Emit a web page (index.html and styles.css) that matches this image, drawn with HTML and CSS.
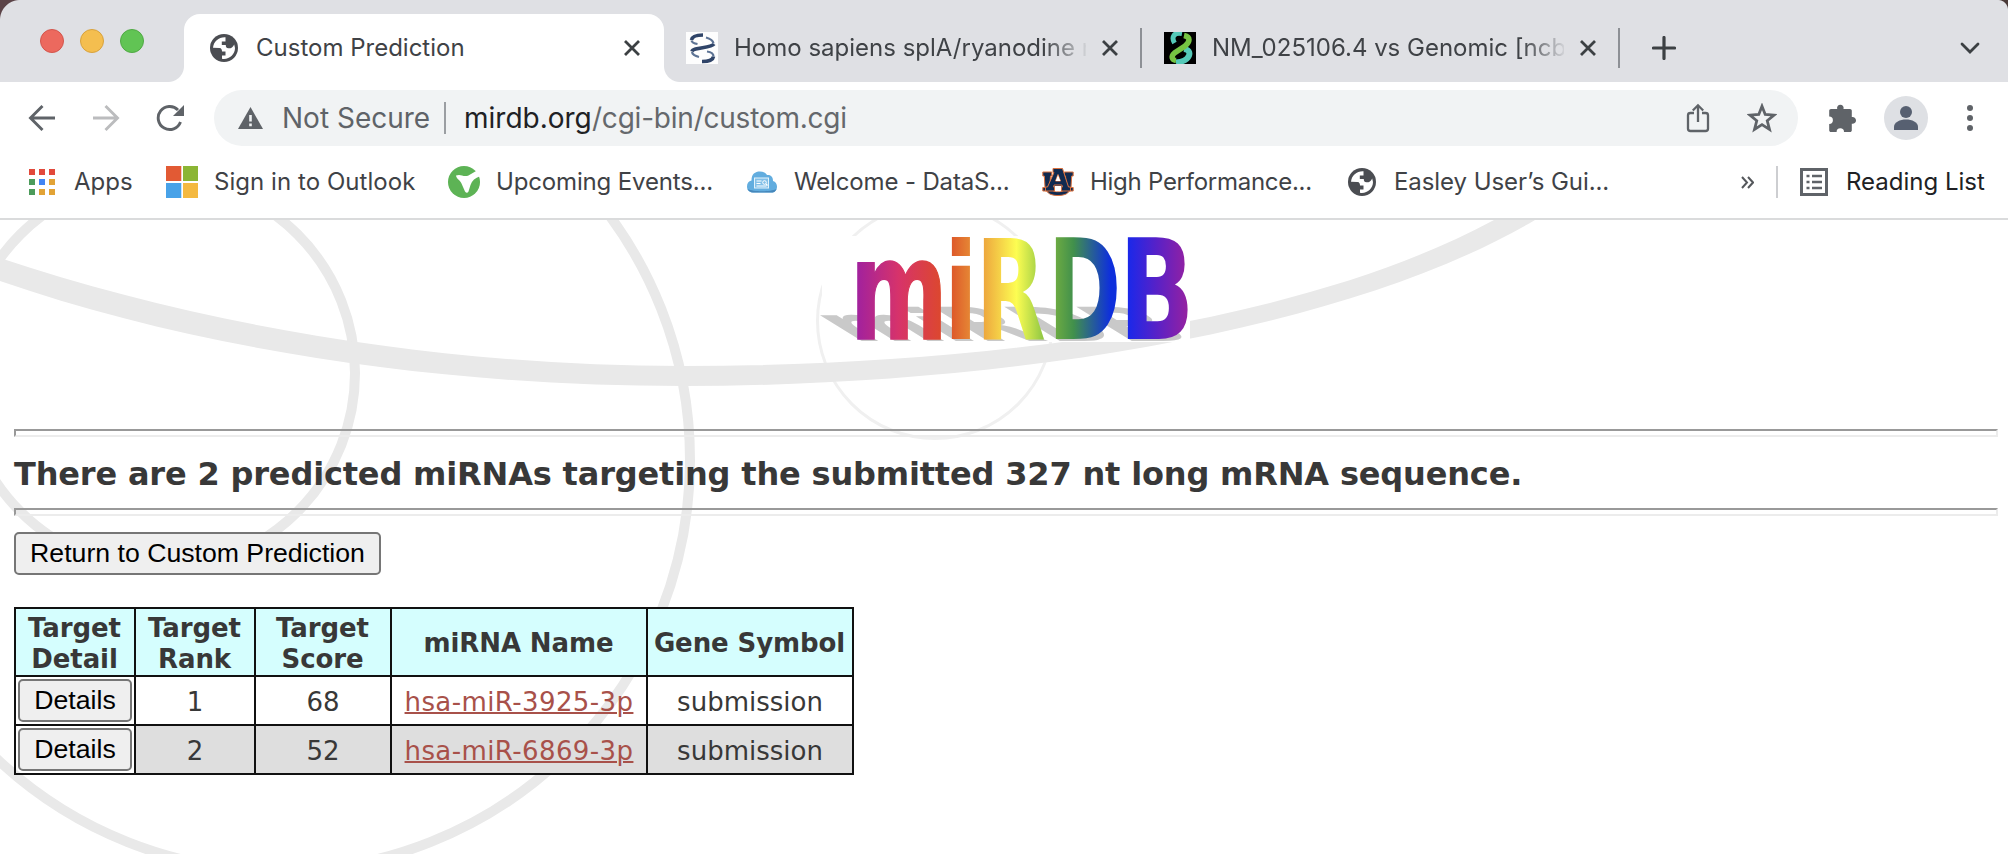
FILE: index.html
```html
<!DOCTYPE html>
<html lang="en">
<head>
<meta charset="utf-8">
<title>Custom Prediction</title>
<link rel="stylesheet" href="styles.css">
</head>
<body>
<svg class="defs" width="0" height="0" aria-hidden="true">
  <symbol id="globe" viewBox="0 0 28 28">
    <circle cx="14" cy="14" r="14" fill="#4b4d52"/>
    <path d="M15.500 3.200C9 2.800 3.500 7.300 3 13.800L9.500 14c2 0 2.500 2 2.500 3.500h3.500v4h-3.500v3.300C19 26 25 20.500 25 14l-.8-3.600c-1.400 2.800-3.200 4.100-5.700 3.900-2.300-.2-2.700-1.500-2.700-3.300h-4V7.600h3.700z" fill="#fff"/>
  </symbol>
  <symbol id="close" viewBox="0 0 18 18"><path d="M2 2l14 14M16 2L2 16" stroke="#3c4043" stroke-width="2.8" fill="none"/></symbol>
</svg>

<header class="browser">
  <div class="tabstrip">
    <div class="lights"><i class="light red"></i><i class="light amber"></i><i class="light green"></i></div>
    <div class="tab active">
      <svg class="ico28"><use href="#globe"/></svg>
      <span class="tab-title t1">Custom Prediction</span>
      <svg class="ico18"><use href="#close"/></svg>
    </div>
    <div class="tab second">
      <svg class="ico32" viewBox="0 0 32 32"><rect width="32" height="32" fill="#fdfdfd"/><g fill="none" stroke="#2f4468" stroke-width="3.600"><path d="M17 3C10 3 6 4.500 5.500 8"/><path d="M6 19.500C7 15 25 16.500 28 12"/><path d="M16 29.500c6 0 11-1.500 11.500-5"/></g><g fill="none" stroke="#5d7394" stroke-width="2.200"><path d="M20 5.500c4 1 7 3 7.500 6"/><path d="M5.500 8.500c.5 2 3 3 6 3.500"/><path d="M6 20c.5 2.500 3 4 7 5"/><path d="M21 19.500c4 .5 6.500 2 6.500 5"/></g></svg>
      <span class="tab-title fade t2">Homo sapiens splA/ryanodine receptor</span>
      <svg class="ico18"><use href="#close"/></svg>
    </div>
    <i class="tab-sep"></i>
    <div class="tab third">
      <svg class="ico32" viewBox="0 0 32 32"><rect width="32" height="32"/><g fill="none" stroke-width="5"><path d="M18 1.500C10 0 7 5 10.500 11" stroke="#55c9b8"/><path d="M20 17c9 1 7 12-8 13.500" stroke="#55c9b8" stroke-width="6"/><path d="M20 3.500c7 1.500 6 6 1 10.500L10.500 21C6.500 24.500 8 28 12 28.500" stroke="#76c442" stroke-width="5.500"/></g></svg>
      <span class="tab-title fade t3">NM_025106.4 vs Genomic [ncbi]</span>
      <svg class="ico18"><use href="#close"/></svg>
    </div>
    <i class="tab-sep"></i>
    <svg class="plus" viewBox="0 0 24 24"><path d="M12 1.500v21M1.500 12h21" stroke="#3c4043" stroke-width="3.200" stroke-linecap="round"/></svg>
    <svg class="chev" viewBox="0 0 20 12"><path d="M2 2l8 8 8-8" fill="none" stroke="#3c4043" stroke-width="2.800" stroke-linecap="round"/></svg>
  </div>

  <div class="toolbar">
    <svg class="nav" viewBox="0 0 28 28"><path d="M27 14H3M14.500 2L2.500 14l12 12" fill="none" stroke="#5f6368" stroke-width="2.900"/></svg>
    <svg class="nav" viewBox="0 0 28 28"><path d="M1 14h24M13.500 2l12 12-12 12" fill="none" stroke="#bbbcbe" stroke-width="2.900"/></svg>
    <svg class="nav" viewBox="0 0 28 28"><path d="M24.500 18A11.500 11.500 0 1 1 22 6" fill="none" stroke="#5f6368" stroke-width="2.900"/><path d="M28 1v11H17z" fill="#5f6368"/></svg>
    <div class="omnibox">
      <svg class="warn" viewBox="0 0 25 22"><path d="M12.500 0L25 22H0z" fill="#5f6368"/><path d="M12.500 8v6.500M12.500 16.500v2.700" stroke="#f1f3f4" stroke-width="2.600"/></svg>
      <span class="not-secure">Not Secure</span>
      <i class="url-sep"></i>
      <span class="host">mirdb.org</span><span class="path">/cgi-bin/custom.cgi</span>
      <svg class="share" viewBox="0 0 24 30"><path d="M8 10H4.500C2.800 10 2 11 2 12.300v13.400C2 27 2.800 28 4.500 28h15c1.700 0 2.500-1 2.500-2.300V12.300c0-1.300-.8-2.300-2.500-2.300H16M12 19V2.500M6.800 7.500L12 2.300l5.200 5.200" fill="none" stroke="#5f6368" stroke-width="2.300"/></svg>
      <svg class="star" viewBox="0 0 28 28"><path d="M14 3l3 7.700 8.300.6-6.400 5.300 2.100 8.100-7-4.500-7 4.500 2.100-8.100-6.400-5.300 8.300-.6z" fill="none" stroke="#5f6368" stroke-width="2.600"/></svg>
    </div>
    <svg class="puzzle" viewBox="0 0 28 28"><path d="M2.500 5h6.200a3.300 3.300 0 1 1 6.300 0h6.500c1 0 1.800.8 1.800 1.800v6.300a3.400 3.400 0 1 1 0 6.600v6.500c0 1-.8 1.800-1.800 1.800h-6a3.700 3.700 0 0 0-7.400 0H2.500C1.500 28 .7 27.200.7 26.200V20a3.700 3.700 0 0 0 0-7.400V6.800C.7 5.800 1.500 5 2.500 5z" fill="#5f6368"/></svg>
    <svg class="avatar" viewBox="0 0 44 44"><circle cx="22" cy="22" r="22" fill="#dee0e4"/><circle cx="22" cy="16" r="6" fill="#576071"/><path d="M10 34v-3c0-5 6-7.500 12-7.500S34 26 34 31v3z" fill="#576071"/></svg>
    <svg class="dots" viewBox="0 0 6 26"><g fill="#5f6368"><circle cx="3" cy="3" r="3"/><circle cx="3" cy="13" r="3"/><circle cx="3" cy="23" r="3"/></g></svg>
  </div>

  <nav class="bookmarks">
    <svg class="b-apps" viewBox="0 0 26 26"><g fill="#e2493b"><path d="M0 0h6v6H0zM10 0h6v6h-6zM20 0h6v6h-6z"/></g><g fill="#4c9b5b"><path d="M0 10h6v6H0zM0 20h6v6H0z"/></g><path d="M10 10h6v6h-6z" fill="#4285f4"/><path d="M20 10h6v6h-6zM10 20h6v6h-6zM20 20h6v6h-6z" fill="#e2a336"/></svg>
    <span class="bm m1">Apps</span>
    <svg class="ico32" viewBox="0 0 32 32"><path d="M0 0h15.300v15H0z" fill="#e25a34"/><path d="M17 0h15v15H17z" fill="#8bb534"/><path d="M0 17h15.300v15H0z" fill="#48a2e8"/><path d="M17 17h15v15H17z" fill="#f4b940"/></svg>
    <span class="bm m2">Sign in to Outlook</span>
    <svg class="ico32" viewBox="0 0 32 32"><circle cx="16" cy="16" r="16" fill="#5db355"/><path d="M8 9.500q3-1 6 0 3 1 6 .2L29 4.500l3.500 5.500c-5 1.500-8.500 4.500-10 9l-2 6.500q-1.500 2.500-3.500 0l-3.500-8C12 14 8.500 13 8 9.500z" fill="#fff"/></svg>
    <span class="bm m3">Upcoming Events...</span>
    <svg class="b-cloud" viewBox="0 0 30 22"><path d="M6 21.500C2 21.500 0 19 0 15.500c0-3 1.500-5.500 4.500-6C4.500 3 8 .5 13 .5c4 0 6 1.500 7 3.500 4-.5 6 2 6 6 2.500.8 4 3 4 5.500 0 3.500-2 6-6 6z" fill="#62addf"/><path d="M.5 18c6 3 23 3 29 0-1 3-3 3.500-5 3.500H6C4 21.500 1.500 20 .5 18z" fill="#4687bb"/><rect x="7.500" y="7" width="14" height="10" fill="#83c0e8" stroke="#e3f3fc"/><path d="M9.500 10h5M9.500 12.500h4M9.500 15h10M19 13l1.500 1.500" stroke="#fff" stroke-width="1.200"/><circle cx="17.500" cy="11.500" r="1.800" fill="none" stroke="#fff"/></svg>
    <span class="bm m4">Welcome - DataS...</span>
    <svg class="ico32" viewBox="0 0 32 32"><g fill="#102a50" stroke="#d9713f" stroke-width="1"><path fill-rule="evenodd" d="M.8 6h9v4H8.500l-.5 8h16l-.5-8h-1.300V6h9v4h-1.500l-.7 11.500h2.200V25h-4c-1.500 3-5.500 4.500-11.200 4.500S6.300 28 4.800 25h-4v-3.500H3L2.300 10H.8zM10.500 24.500c1.500 1 3.300 1.200 5.500 1.200s4-.2 5.500-1.200z"/><path fill-rule="evenodd" d="M11 2.500h9.500l6 18.500h2v4h-9v-4h1l-.6-2h-7.800l-.6 2h1v4h-9v-4h2L12 6.500h-1zM16 8.500L13.500 15h5z"/></g><path d="M16 9l2.300 6h-4.600zM12.500 20h7l-.5 1.500v3.700h-6v-3.700z" fill="#fff"/></svg>
    <span class="bm m5">High Performance...</span>
    <svg class="ico28"><use href="#globe"/></svg>
    <span class="bm m6">Easley User’s Gui...</span>
    <svg class="more" viewBox="0 0 13 13"><path d="M1 1l5 5.500L1 12M7 1l5 5.500L7 12" fill="none" stroke="#55585c" stroke-width="2"/></svg>
    <i class="bm-sep"></i>
    <svg class="ico28" viewBox="0 0 28 28"><rect x="1.500" y="1.500" width="25" height="25" fill="none" stroke="#5f6368" stroke-width="3"/><path d="M6.500 8h3M12 8h10M6.500 14h3M12 14h10M6.500 20h3M12 20h10" stroke="#5f6368" stroke-width="2.600"/></svg>
    <span class="bm m7">Reading List</span>
  </nav>
</header>

<main class="page">
  <svg class="swirl" viewBox="0 220 2008 634" aria-hidden="true">
    <g fill="none" stroke="#e9e9e9" stroke-width="10">
      <circle cx="159" cy="373" r="196"/>
      <circle cx="279" cy="460" r="411"/>
    </g>
    <circle cx="935" cy="321" r="117.500" fill="none" stroke="#f0f0f0" stroke-width="3"/>
    <path d="M0 258C200 325 440 366 683 366 980 366 1300 325 1494 220H1535C1340 335 990 386 683 386 440 386 200 350 0 281z" fill="#e9e9e9"/>
  </svg>
  <div class="content">
    <svg class="logo" viewBox="822 236 368 106" role="img" aria-label="miRDB">
      <defs>
        <linearGradient id="gm"><stop offset=".06" stop-color="#a0219f"/><stop offset=".5" stop-color="#d7336a"/><stop offset=".92" stop-color="#dc4730"/></linearGradient>
        <linearGradient id="gi"><stop offset=".2" stop-color="#dd5529"/><stop offset=".8" stop-color="#e68a35"/></linearGradient>
        <linearGradient id="gr"><stop offset=".1" stop-color="#eda43d"/><stop offset=".58" stop-color="#fdfd52"/><stop offset=".95" stop-color="#93c944"/></linearGradient>
        <linearGradient id="gd"><stop offset=".1" stop-color="#6dab42"/><stop offset=".35" stop-color="#41904c"/><stop offset=".85" stop-color="#0e2fdc"/></linearGradient>
        <linearGradient id="gb"><stop offset=".12" stop-color="#1a28ea"/><stop offset=".5" stop-color="#5821c7"/><stop offset=".9" stop-color="#9421a2"/></linearGradient>
      </defs>
      <rect x="822" y="236" width="368" height="106" fill="#fff"/>
      <g class="logo-shadow" transform="translate(4 341) matrix(1 0 .55 .34 0 0)">
        <text transform="translate(850 0) scale(.677 1)">m</text>
        <text transform="translate(943.300 0) scale(.744 .96)">i</text>
        <text transform="translate(975.600 0) scale(.66 1)">R</text>
        <text transform="translate(1047.800 0) scale(.64 1)">D</text>
        <text transform="translate(1118.800 0) scale(.718 1)">B</text>
      </g>
      <g class="logo-text">
        <text class="logo-m" fill="url(#gm)" stroke="url(#gm)" transform="translate(850 338.500) scale(.677 1)">m</text>
        <text fill="url(#gi)" transform="translate(943.300 338.500) scale(.744 .96)">i</text>
        <text fill="url(#gr)" transform="translate(975.600 338.500) scale(.66 1)">R</text>
        <text fill="url(#gd)" transform="translate(1047.800 338.500) scale(.64 1)">D</text>
        <text fill="url(#gb)" transform="translate(1118.800 338.500) scale(.718 1)">B</text>
      </g>
    </svg>
    <hr class="rule">
    <h1 class="headline">There are 2 predicted miRNAs targeting the submitted 327 nt long mRNA sequence.</h1>
    <hr class="rule">
    <button class="btn back">Return to Custom Prediction</button>
    <table class="results">
      <colgroup><col class="c1"><col class="c2"><col class="c3"><col class="c4"><col class="c5"></colgroup>
      <tr class="head"><th>Target<br>Detail</th><th>Target<br>Rank</th><th>Target<br>Score</th><th>miRNA Name</th><th>Gene Symbol</th></tr>
      <tr class="row"><td class="cell-btn"><button class="btn details">Details</button></td><td>1</td><td>68</td><td><a class="mir" href="#">hsa-miR-3925-3p</a></td><td>submission</td></tr>
      <tr class="row alt"><td class="cell-btn"><button class="btn details">Details</button></td><td>2</td><td>52</td><td><a class="mir" href="#">hsa-miR-6869-3p</a></td><td>submission</td></tr>
    </table>
  </div>
</main>
</body>
</html>
```

FILE: styles.css
```css
* { box-sizing: border-box; }
body { margin: 0; width: 2008px; height: 854px; overflow: hidden; background: #fff; }
svg { display: block; flex: none; }
.defs { position: absolute; }

.browser { height: 220px; background: #fff; border-bottom: 2px solid #dadbdc; font-family: Inter, "Liberation Sans", sans-serif; }
.tabstrip { height: 82px; display: flex; align-items: center; padding-top: 14px; background: radial-gradient(circle at 20px 20px, #dfe0e4 19.500px, #5c4448 20.500px) 0 0 / 20px 20px no-repeat, radial-gradient(circle at 0 10px, #dfe0e4 9.500px, #4a3a38 10.500px) 100% 0 / 10px 10px no-repeat, #dfe0e4; }
.lights { width: 184px; display: flex; gap: 16px; padding: 0 0 14px 40px; }
.light { width: 24px; height: 24px; border-radius: 50%; border: 1px solid; }
.red { background: #ec695e; border-color: #d3554c; }
.amber { background: #f4be4f; border-color: #d8a23d; }
.green { background: #61c454; border-color: #50a944; }

.ico28 { width: 28px; height: 28px; }
.ico18 { width: 18px; height: 18px; }
.ico32 { width: 32px; height: 32px; }
.tab { display: flex; align-items: center; height: 68px; }
.tab-title { white-space: nowrap; overflow: hidden; font-size: 24px; line-height: 32px; color: #3f4246; }
.active { position: relative; width: 480px; padding-left: 26px; background: #fff; border-radius: 16px 16px 0 0; }
.active::before, .active::after { content: ""; position: absolute; bottom: 0; width: 16px; height: 16px; }
.active::before { left: -16px; background: radial-gradient(circle at 0 0, transparent 15.500px, #fff 16.500px); }
.active::after { right: -16px; background: radial-gradient(circle at 100% 0, transparent 15.500px, #fff 16.500px); }
.second { width: 476px; padding-left: 22px; }
.third { width: 476px; padding-left: 22px; }
.fade { -webkit-mask-image: linear-gradient(90deg, #000 310px, transparent 356px); mask-image: linear-gradient(90deg, #000 310px, transparent 356px); }
.t1 { width: 351px; margin: 0 16px 0 18px; }
.t2, .t3 { width: 352px; margin: 0 15px 0 16px; }
.tab-sep { width: 2px; height: 40px; background: #8d9095; }
.plus { width: 24px; height: 24px; margin-left: 32px; }
.chev { width: 20px; height: 12px; margin-left: 284px; }

.toolbar { height: 72px; display: flex; align-items: center; padding-left: 28px; }
.nav { width: 28px; height: 28px; margin-right: 36px; }
.omnibox { width: 1584px; height: 56px; margin-left: -6px; border-radius: 28px; background: #f1f3f4; display: flex; align-items: center; padding-left: 24px; font-size: 28px; line-height: 36px; white-space: nowrap; }
.warn { width: 25px; height: 22px; }
.not-secure { width: 163px; margin-left: 19px; color: #5f6368; }
.url-sep { width: 2px; height: 32px; margin: 0 18px 0 -1px; background: #9b9ea2; }
.host { width: 128px; color: #202124; }
.path { width: 1094px; color: #65686c; letter-spacing: -.22px; }
.share { width: 24px; height: 30px; }
.star { width: 30px; height: 30px; margin-left: 37px; }
.puzzle { width: 29px; height: 28px; margin-left: 30px; }
.avatar { width: 44px; height: 44px; margin-left: 27px; }
.dots { width: 6px; height: 26px; margin-left: 39px; }

.bookmarks { height: 56px; display: flex; align-items: center; padding-left: 29px; font-size: 24px; line-height: 32px; color: #3f4246; }
.bm { white-space: nowrap; }
.b-apps { width: 26px; height: 26px; }
.b-cloud { width: 30px; height: 22px; }
.m1 { margin-left: 19px; width: 92px; }
.m2 { margin-left: 16px; width: 234px; letter-spacing: .05px; }
.m3 { margin-left: 16px; width: 251px; letter-spacing: -.15px; }
.m4 { margin-left: 17px; width: 248px; letter-spacing: -.15px; }
.m5 { margin-left: 16px; width: 258px; letter-spacing: -.27px; }
.m6 { margin-left: 18px; width: 347px; letter-spacing: -.07px; }
.more { width: 13px; height: 13px; }
.bm-sep { width: 2px; height: 32px; margin: 0 22px 0 22px; background: #cdced1; }
.m7 { margin-left: 18px; color: #202124; }

.page { position: relative; height: 634px; font-family: "DejaVu Sans", Verdana, sans-serif; color: #383838; }
.swirl { position: absolute; inset: 0; width: 2008px; height: 634px; }
.content { position: relative; padding: 16px 10px 0 14px; }
.logo { width: 368px; height: 106px; margin-left: 808px; overflow: visible; }
.logo-text, .logo-shadow { font: bold 138.500px "DejaVu Sans", sans-serif; }
.logo-shadow { fill: #c9c9c9; }
.logo-m { stroke-width: 1.500px; }
.rule { height: 8px; margin: 0; border: 2px solid; border-color: #999 #ececec #ececec #999; }
.logo + .rule { margin-top: 87px; }
.headline { margin: 0; height: 71px; font-size: 32px; line-height: 74px; font-weight: bold; letter-spacing: -.17px; white-space: nowrap; }
.btn { display: block; height: 43px; padding: 0; border: 2px solid #767676; border-radius: 5px; background: #efefef; color: #000; font: 26.670px "Liberation Sans", sans-serif; white-space: nowrap; }
.back { width: 367px; margin-top: 16px; }
.results { width: 840px; margin-top: 32px; table-layout: fixed; border-collapse: collapse; font-size: 26px; }
.results th, .results td { border: 2px solid #111; padding: 3px 0 0; text-align: center; }
.c1 { width: 120px; } .c2 { width: 120px; } .c3 { width: 136px; } .c4 { width: 256px; } .c5 { width: 206px; }
.head { height: 68px; background: #d5fefe; line-height: 31px; }
.results th { letter-spacing: -.1px; padding-right: 1px; }
.row { height: 49px; }
.alt td { background: #dedede; }
.results .cell-btn { padding: 0 2px; background: none; }
.details { width: 114px; margin: 0 auto; }
.mir { color: #a8514a; letter-spacing: .4px; text-decoration: underline; text-decoration-thickness: 2px; }
```
